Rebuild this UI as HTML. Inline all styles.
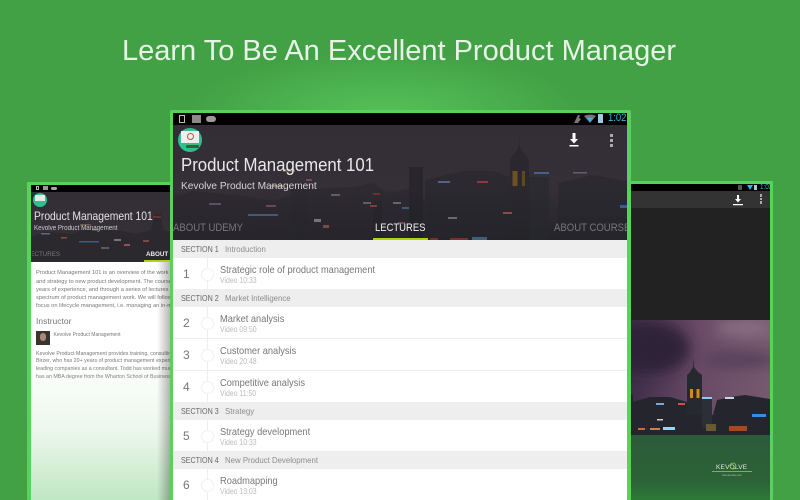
<!DOCTYPE html>
<html><head><meta charset="utf-8">
<style>
html,body{margin:0;padding:0}
body{width:800px;height:500px;overflow:hidden;position:relative;background:#42a045;font-family:"Liberation Sans",sans-serif}
.abs,.abs *{position:absolute;white-space:nowrap}
.glow{left:0;top:0;width:800px;height:500px;background:radial-gradient(ellipse 200px 62px at 385px 112px,#55c056 0%,#4cb350 45%,rgba(66,160,69,0) 100%)}
h1{margin:0;left:122px;top:33px;font-weight:normal;font-size:29px;line-height:36px;color:#fff;letter-spacing:0;opacity:.88}
.frame{background:#58d25c}
.sb{background:#000}
.hdr{background:linear-gradient(#332e35,#352f38 55%,#25242a)}
.sec{left:0;width:454px;background:#eee;height:18px;font-size:8.5px;line-height:18px;color:#666}
.sec b{font-weight:normal;left:8px;transform:scaleX(.84);transform-origin:0 0}
.sec i{font-style:normal;left:52px;color:#8d8d8d;transform:scaleX(.92);transform-origin:0 0}
.row{left:0;width:454px;height:31px;background:#fff}
.n{left:10px;top:9px;font-size:12px;line-height:14px;color:#777}
.c{left:28px;top:10px;width:11px;height:11px;border:1px solid #f0f0f0;border-radius:50%;background:#fff}
.l{left:33.5px;top:0;width:1px;height:31px;background:#eee}
.t{left:46.5px;top:6px;font-size:10.3px;line-height:13px;color:#777;transform:scaleX(.9);transform-origin:0 0}
.s{left:46.5px;top:18px;font-size:8px;line-height:10px;color:#bbb;transform:scaleX(.86);transform-origin:0 0}
.p{left:5px;font-size:5.7px;line-height:8px;color:#777}
.sx{transform-origin:0 0}
</style></head>
<body>
<div class="abs glow"></div>
<h1 class="abs">Learn To Be An Excellent Product Manager</h1>

<!-- LEFT PANEL -->
<div class="abs frame" style="left:27px;top:182px;width:150px;height:318px"></div>
<div class="abs" style="left:31px;top:185px;width:146px;height:315px;background:#fff;overflow:hidden">
  <div class="sb" style="left:0;top:0;width:146px;height:7px"></div>
  <div style="left:5px;top:1px;width:3px;height:4px;border:1px solid #bbb;box-sizing:border-box"></div>
  <div style="left:12px;top:1px;width:5px;height:4px;background:#999"></div>
  <div style="left:20px;top:2px;width:6px;height:3px;background:#aaa;border-radius:2px"></div>
  <div class="hdr" style="left:0;top:7px;width:146px;height:70px;overflow:hidden">
    <svg style="left:0;top:0" width="146" height="70" viewBox="0 0 146 70">
      <path d="M0 45L15 40L40 42L60 36L85 38L105 42L120 38L124 22L130 22L132 38L146 42V70H0Z" fill="#2b282e"/>
      <g>
        <rect x="10" y="41" width="9" height="1.500" fill="#5d6a80"/><rect x="49" y="32" width="11" height="1.500" fill="#6b5a50"/>
        <rect x="61" y="37" width="5" height="1.500" fill="#8a5a60"/><rect x="30" y="45" width="6" height="1.500" fill="#8a4a4a"/>
        <rect x="48" y="49" width="20" height="1.500" fill="#3d5a80"/><rect x="83" y="47" width="7" height="2" fill="#777"/>
        <rect x="93" y="52" width="6" height="2" fill="#9a5050"/><rect x="112" y="48" width="6" height="2" fill="#7a4a4a"/>
        <rect x="122" y="24" width="8" height="2" fill="#6a3030"/><rect x="70" y="55" width="8" height="2" fill="#5a5a60"/>
      </g>
    </svg>
    <div style="left:2px;top:1px;width:14px;height:14px;border-radius:50%;background:#2fc08e"></div>
    <div style="left:4px;top:3px;width:10px;height:6px;background:#e8e8e8"></div>
    <div class="sx" style="left:3px;top:17px;font-size:12px;line-height:14px;color:#e4e4e4;transform:scaleX(.86)">Product Management 101</div>
    <div class="sx" style="left:3px;top:32px;font-size:7px;line-height:9px;color:#ccc;transform:scaleX(.89)">Kevolve Product Management</div>
    <div style="left:1px;top:58px;font-size:6.200px;line-height:9px;color:#777;width:28px;overflow:hidden;direction:rtl">LECTURES</div>
    <div class="sx" style="left:115px;top:58px;font-size:6.800px;line-height:9px;color:#eee;font-weight:bold;transform:scaleX(.92)">ABOUT UDEMY</div>
    <div style="left:113px;top:68px;width:33px;height:2px;background:#a9d60c"></div>
  </div>
  <div class="p" style="top:84px">Product Management 101 is an overview of the work of product management</div>
  <div class="p" style="top:92.500px">and strategy to new product development. The course draws on many</div>
  <div class="p" style="top:100.500px">years of experience, and through a series of lectures we cover the full</div>
  <div class="p" style="top:109px">spectrum of product management work. We will follow this course and</div>
  <div class="p" style="top:117px">focus on lifecycle management, i.e. managing an in-market product</div>
  <div style="left:5px;top:130px;font-size:8.500px;line-height:12px;color:#777">Instructor</div>
  <div style="left:5px;top:146px;width:14px;height:14px;background:#3a342f"></div>
  <div style="left:9px;top:148px;width:6px;height:8px;border-radius:3px;background:#a98a78"></div>
  <div class="p" style="left:22.500px;top:146px;font-size:5px;line-height:8px">Kevolve Product Management</div>
  <div class="p" style="top:164.500px;font-size:5.300px">Kevolve Product Management provides training, consulting and coaching</div>
  <div class="p" style="top:172px;font-size:5.300px">Birzer, who has 20+ years of product management experience at many</div>
  <div class="p" style="top:180px;font-size:5.300px">leading companies as a consultant. Todd has worked much of his career</div>
  <div class="p" style="top:187.500px;font-size:5.300px">has an MBA degree from the Wharton School of Business at the University</div>
  <div style="left:0;top:170px;width:146px;height:145px;background:linear-gradient(rgba(200,235,200,0),rgba(205,235,205,.35) 50%,rgba(150,215,155,.6))"></div>
  <div style="left:126px;top:77px;width:14px;height:238px;background:linear-gradient(90deg,rgba(0,0,0,0),rgba(0,0,0,.3))"></div>
</div>

<!-- RIGHT PANEL -->
<div class="abs frame" style="left:620px;top:181px;width:153px;height:319px"></div>
<div class="abs" style="left:625px;top:184px;width:145px;height:316px;background:#222;overflow:hidden">
  <div class="sb" style="left:0;top:0;width:145px;height:7px"></div>
  <div style="left:113px;top:1px;width:4px;height:5px;background:#555"></div>
  <div style="left:122px;top:1px;width:0;height:0;border:3px solid transparent;border-top:5px solid #33b5e5"></div>
  <div style="left:129px;top:1px;width:3px;height:5px;background:#9cd"></div>
  <div class="sx" style="left:135px;top:0;font-size:7px;line-height:7px;color:#33b5e5;transform:scaleX(.9)">1:02</div>
  <div style="left:0;top:7px;width:145px;height:17px;background:#333"></div>
  <svg style="left:107px;top:10px" width="12" height="12" viewBox="0 0 12 12"><path d="M5 1h2v4h2L6 8.500 3 5h2zM1 10h10v1.200H1z" fill="#fff"/></svg>
  <div style="left:134.500px;top:10px;width:2.500px;height:2.500px;background:#aaa"></div>
  <div style="left:134.500px;top:13.500px;width:2.500px;height:2.500px;background:#aaa"></div>
  <div style="left:134.500px;top:17px;width:2.500px;height:2.500px;background:#aaa"></div>
  <svg style="left:0;top:136px" width="145" height="180" viewBox="0 0 145 180">
    <defs><linearGradient id="sky" x1="0" y1="0" x2="1" y2="0"><stop offset="0" stop-color="#3a2a46"/><stop offset=".5" stop-color="#6a4a66"/><stop offset="1" stop-color="#75596f"/></linearGradient>
    <linearGradient id="fade" x1="0" y1="0" x2="0" y2="1"><stop offset="0" stop-color="#2c5a3a"/><stop offset=".7" stop-color="#2c6236"/><stop offset="1" stop-color="#2d7a38"/></linearGradient>
    <filter id="bl" x="-100%" y="-200%" width="300%" height="500%"><feGaussianBlur stdDeviation="7"/></filter></defs>
    <rect width="145" height="180" fill="url(#sky)"/>
    <ellipse cx="25" cy="28" rx="40" ry="26" fill="#2f2239" filter="url(#bl)"/>
    <ellipse cx="115" cy="40" rx="40" ry="6" fill="#4d3a54" filter="url(#bl)"/>
    <ellipse cx="120" cy="8" rx="30" ry="8" fill="#8a7183" filter="url(#bl)"/>
    <g transform="translate(6 0)">
    <path d="M2 82L19 77H39L56 82V95H82L86 80L100 77L114 75L145 80V115H-6V75H2Z" fill="#25262d"/>
    <path d="M56 95V55L59 52L62 47V38L63 47L67 52L71 55V95Z" fill="#262a30"/>
    <rect x="59" y="69" width="3" height="9" fill="#d1891d"/><rect x="65.500" y="69" width="3" height="9" fill="#d1891d"/>
    <rect x="71" y="78" width="10" height="30" fill="#2b2f36"/>
    <rect x="-6" y="75" width="7" height="38" fill="#1b1b20"/>
    <rect x="25" y="83" width="8" height="2" fill="#7ea3e0"/><rect x="47" y="83" width="7" height="2" fill="#d05040"/>
    <rect x="71" y="77" width="10" height="2" fill="#8fc8f0"/><rect x="94" y="77" width="9" height="2" fill="#c8d4ee"/>
    <rect x="26" y="99" width="6" height="1.500" fill="#ccc"/><rect x="121" y="94" width="14" height="3" fill="#3a8ae0"/>
    <rect x="7" y="108" width="7" height="2" fill="#e0603a"/><rect x="19" y="108" width="10" height="2" fill="#d08050"/>
    <rect x="32" y="107" width="12" height="3" fill="#8fdcf0"/>
    <rect x="75" y="104" width="10" height="7" fill="#6a5a30"/><rect x="98" y="106" width="18" height="5" fill="#a04a2a"/>
    </g>
    <rect x="0" y="115" width="145" height="65" fill="url(#fade)"/>
    <text x="91" y="149" font-family="Liberation Sans" font-size="6.500" fill="#dfe8d8" letter-spacing=".2">KEVOLVE</text>
    <rect x="87" y="151" width="40" height=".8" fill="#8ccf3f"/>
    <circle cx="108" cy="146" r="3" fill="none" stroke="#8ccf3f" stroke-width=".8"/>
    <text x="97" y="156" font-family="Liberation Sans" font-size="2.500" fill="#bbb">www.kevolve.com</text>
  </svg>
</div>

<!-- CENTER PANEL -->
<div class="abs frame" style="left:170px;top:110px;width:461px;height:390px;border-radius:2px 2px 0 0"></div>
<div class="abs" style="left:173px;top:113px;width:454px;height:387px;background:#fff;overflow:hidden">
  <div class="sb" style="left:0;top:0;width:454px;height:12px"></div>
  <div style="left:6px;top:2px;width:6px;height:8px;border:1px solid #bbb;box-sizing:border-box"></div>
  <div style="left:19px;top:2px;width:9px;height:8px;background:#8a8a8a"></div>
  <div style="left:33px;top:3px;width:10px;height:6px;background:#9a9a9a;border-radius:3px"></div>
  <svg style="left:398px;top:1px" width="12" height="10" viewBox="0 0 12 10"><path d="M3 9L7 1h2L8 4l2 1L7 9z" fill="#777"/></svg>
  <svg style="left:411px;top:1px" width="12" height="10" viewBox="0 0 12 10"><path d="M0 2Q6-1 12 2L6 9z" fill="#777"/><path d="M3 4Q6 3 9 4L6 8z" fill="#33b5e5"/></svg>
  <div style="left:425px;top:1px;width:5px;height:9px;background:#9ccbe0"></div>
  <div class="sx" style="left:435px;top:-1px;font-size:11px;line-height:13px;color:#33b5e5;transform:scaleX(.86)">1:02</div>
  <div class="hdr" style="left:0;top:12px;width:454px;height:115px;overflow:hidden">
    <svg style="left:0;top:0" width="454" height="115" viewBox="0 0 454 115">
      <g opacity=".55">
      <path d="M0 72L20 66L60 70L100 76L135 64L180 62L200 58L215 68L236 64L252 75V115H0Z" fill="#29272d"/>
      <path d="M252 55L290 46L320 46L337 52V115H252Z" fill="#25252b"/>
      <path d="M337 115V34L340 30L346 22V8L347 22L352 30L356 34V115Z" fill="#232428"/>
      <rect x="236" y="42" width="14" height="73" fill="#1f1f24"/>
      <rect x="356" y="52" width="20" height="63" fill="#26282e"/><path d="M385 58L420 50L454 56V115H385Z" fill="#26262c"/>
      <rect x="200" y="75" width="9" height="65" fill="#232227"/><rect x="118" y="58" width="16" height="60" fill="#27262b"/>
      </g>
      <rect x="339.500" y="46" width="5" height="15" fill="#6b5224"/><rect x="349" y="46" width="3" height="15" fill="#5e4a20"/>
      <g>
        <rect x="36" y="78" width="12" height="2" fill="#5a5060"/><rect x="75" y="89" width="30" height="2" fill="#405a7a"/>
        <rect x="110" y="44" width="12" height="3" fill="#6a5a4c"/><rect x="133" y="54" width="6" height="2" fill="#7a4a50"/>
        <rect x="98" y="60" width="12" height="2" fill="#7c6a58"/><rect x="93" y="80" width="10" height="2" fill="#6a4a50"/>
        <rect x="141" y="94" width="7" height="3" fill="#77737a"/><rect x="150" y="100" width="6" height="3" fill="#7a4a4a"/>
        <rect x="197" y="80" width="7" height="2" fill="#7a4040"/><rect x="220" y="77" width="8" height="2" fill="#6c6658"/>
        <rect x="200" y="68" width="7" height="2" fill="#6a3030"/><rect x="225" y="97" width="7" height="2" fill="#6a4a50"/>
        <rect x="265" y="56" width="12" height="2" fill="#55618a"/><rect x="304" y="56" width="11" height="2" fill="#8a3a3a"/>
        <rect x="330" y="87" width="9" height="2" fill="#8d4a4a"/><rect x="275" y="92" width="9" height="2" fill="#6b6b6b"/>
        <rect x="361" y="47" width="15" height="2" fill="#45618a"/><rect x="400" y="47" width="14" height="1.500" fill="#5a6270"/>
        <rect x="257" y="113" width="8" height="2" fill="#7a3030"/><rect x="277" y="113" width="18" height="2" fill="#7a3030"/>
        <rect x="299" y="112" width="15" height="3" fill="#3d5f78"/><rect x="229" y="82" width="7" height="2" fill="#3d5a80"/>
        <rect x="447" y="80" width="7" height="3" fill="#2f5f95"/><rect x="158" y="69" width="9" height="2" fill="#6b5a58"/>
        <rect x="190" y="77" width="8" height="2" fill="#6a5a60"/>
      </g>
    </svg>
    <div style="left:5px;top:3px;width:24px;height:24px;border-radius:50%;background:#2fc08e"></div>
    <div style="left:8px;top:6px;width:18px;height:12px;background:#eee"></div>
    <div style="left:13.500px;top:8px;width:5px;height:5px;border:1px solid #d04a3a;border-radius:50%"></div>
    <div style="left:13px;top:20px;width:13px;height:3px;background:#3d5a30;border-radius:1px"></div>
    <div class="sx" style="left:8px;top:28px;font-size:18px;line-height:24px;color:#e8e8e8;transform:scaleX(.932)">Product Management 101</div>
    <div class="sx" style="left:7.500px;top:54px;font-size:10.500px;line-height:14px;color:#d4d4d4;transform:scaleX(.965)">Kevolve Product Management</div>
    <div class="sx" style="left:0;top:96px;font-size:11px;line-height:14px;color:#777;transform:scaleX(.87)">ABOUT UDEMY</div>
    <div class="sx" style="left:202px;top:96px;font-size:11px;line-height:14px;color:#f2f2f2;transform:scaleX(.86)">LECTURES</div>
    <div style="left:200px;top:113px;width:55px;height:2px;background:#a9d60c"></div>
    <div class="sx" style="left:380.500px;top:96px;font-size:11px;line-height:14px;color:#777;transform:scaleX(.87)">ABOUT COURSE</div>
    <svg style="left:394px;top:8px" width="14" height="14" viewBox="0 0 14 14"><path d="M5.500 0h3v6h2.500L7 10.500 3 6h2.500zM2.500 12h9v1.500h-9z" fill="#fff"/></svg>
    <div style="left:436.500px;top:9px;width:3px;height:3px;background:#aaa"></div>
    <div style="left:436.500px;top:14px;width:3px;height:3px;background:#aaa"></div>
    <div style="left:436.500px;top:19px;width:3px;height:3px;background:#aaa"></div>
  </div>

  <div class="sec" style="top:127px"><b>SECTION 1</b><i>Introduction</i></div>
  <div class="row" style="top:145px"><div class="l"></div><div class="n">1</div><div class="c"></div><div class="t">Strategic role of product management</div><div class="s">Video 10:33</div></div>
  <div class="sec" style="top:176px"><b>SECTION 2</b><i>Market Intelligence</i></div>
  <div class="row" style="top:194px"><div class="l"></div><div class="n">2</div><div class="c"></div><div class="t">Market analysis</div><div class="s">Video 09:50</div></div>
  <div style="left:0;top:225px;width:454px;height:1px;background:#eee"></div>
  <div class="row" style="top:226px"><div class="l"></div><div class="n">3</div><div class="c"></div><div class="t">Customer analysis</div><div class="s">Video 20:48</div></div>
  <div style="left:0;top:256.500px;width:454px;height:1px;background:#eee"></div>
  <div class="row" style="top:257.500px"><div class="l"></div><div class="n">4</div><div class="c"></div><div class="t">Competitive analysis</div><div class="s">Video 11:50</div></div>
  <div class="sec" style="top:288.500px"><b>SECTION 3</b><i>Strategy</i></div>
  <div class="row" style="top:307px"><div class="l"></div><div class="n">5</div><div class="c"></div><div class="t">Strategy development</div><div class="s">Video 10:33</div></div>
  <div class="sec" style="top:338px"><b>SECTION 4</b><i>New Product Development</i></div>
  <div class="row" style="top:356px"><div class="l"></div><div class="n">6</div><div class="c"></div><div class="t">Roadmapping</div><div class="s">Video 13:03</div></div>
</div>
</body></html>
